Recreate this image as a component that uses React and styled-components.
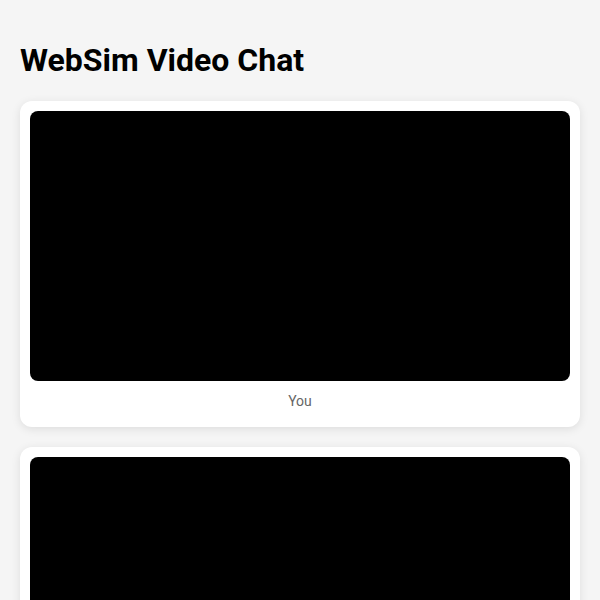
import React from "react";
import styled, { createGlobalStyle } from "styled-components";

const GlobalStyle = createGlobalStyle`
  * { box-sizing: border-box; }
  body {
    margin: 0;
    background: #f5f5f5;
    font-family: Roboto, "Liberation Sans", sans-serif;
    color: #000;
  }
`;

const Page = styled.div`
  padding: 20px;
`;

const Title = styled.h1`
  font-size: 32px;
  font-weight: 700;
  margin: 0.67em 0;
`;

const Grid = styled.div`
  display: flex;
  flex-direction: column;
  gap: 20px;
`;

const Card = styled.div`
  background: #fff;
  border-radius: 12px;
  padding: 10px;
  box-shadow: 0 2px 10px rgba(0, 0, 0, 0.1);
`;

const Screen = styled.div`
  width: 100%;
  aspect-ratio: 2 / 1;
  background: #000;
  border-radius: 8px;
`;

const Label = styled.div`
  text-align: center;
  font-size: 14px;
  color: #666;
  padding: 12px 0 8px;
`;

const VideoTile = ({ name }) => (
  <Card>
    <Screen />
    {name && <Label>{name}</Label>}
  </Card>
);

export default function App() {
  return (
    <>
      <GlobalStyle />
      <Page>
        <Title>WebSim Video Chat</Title>
        <Grid>
          <VideoTile name="You" />
          <VideoTile name="Peer" />
        </Grid>
      </Page>
    </>
  );
}
